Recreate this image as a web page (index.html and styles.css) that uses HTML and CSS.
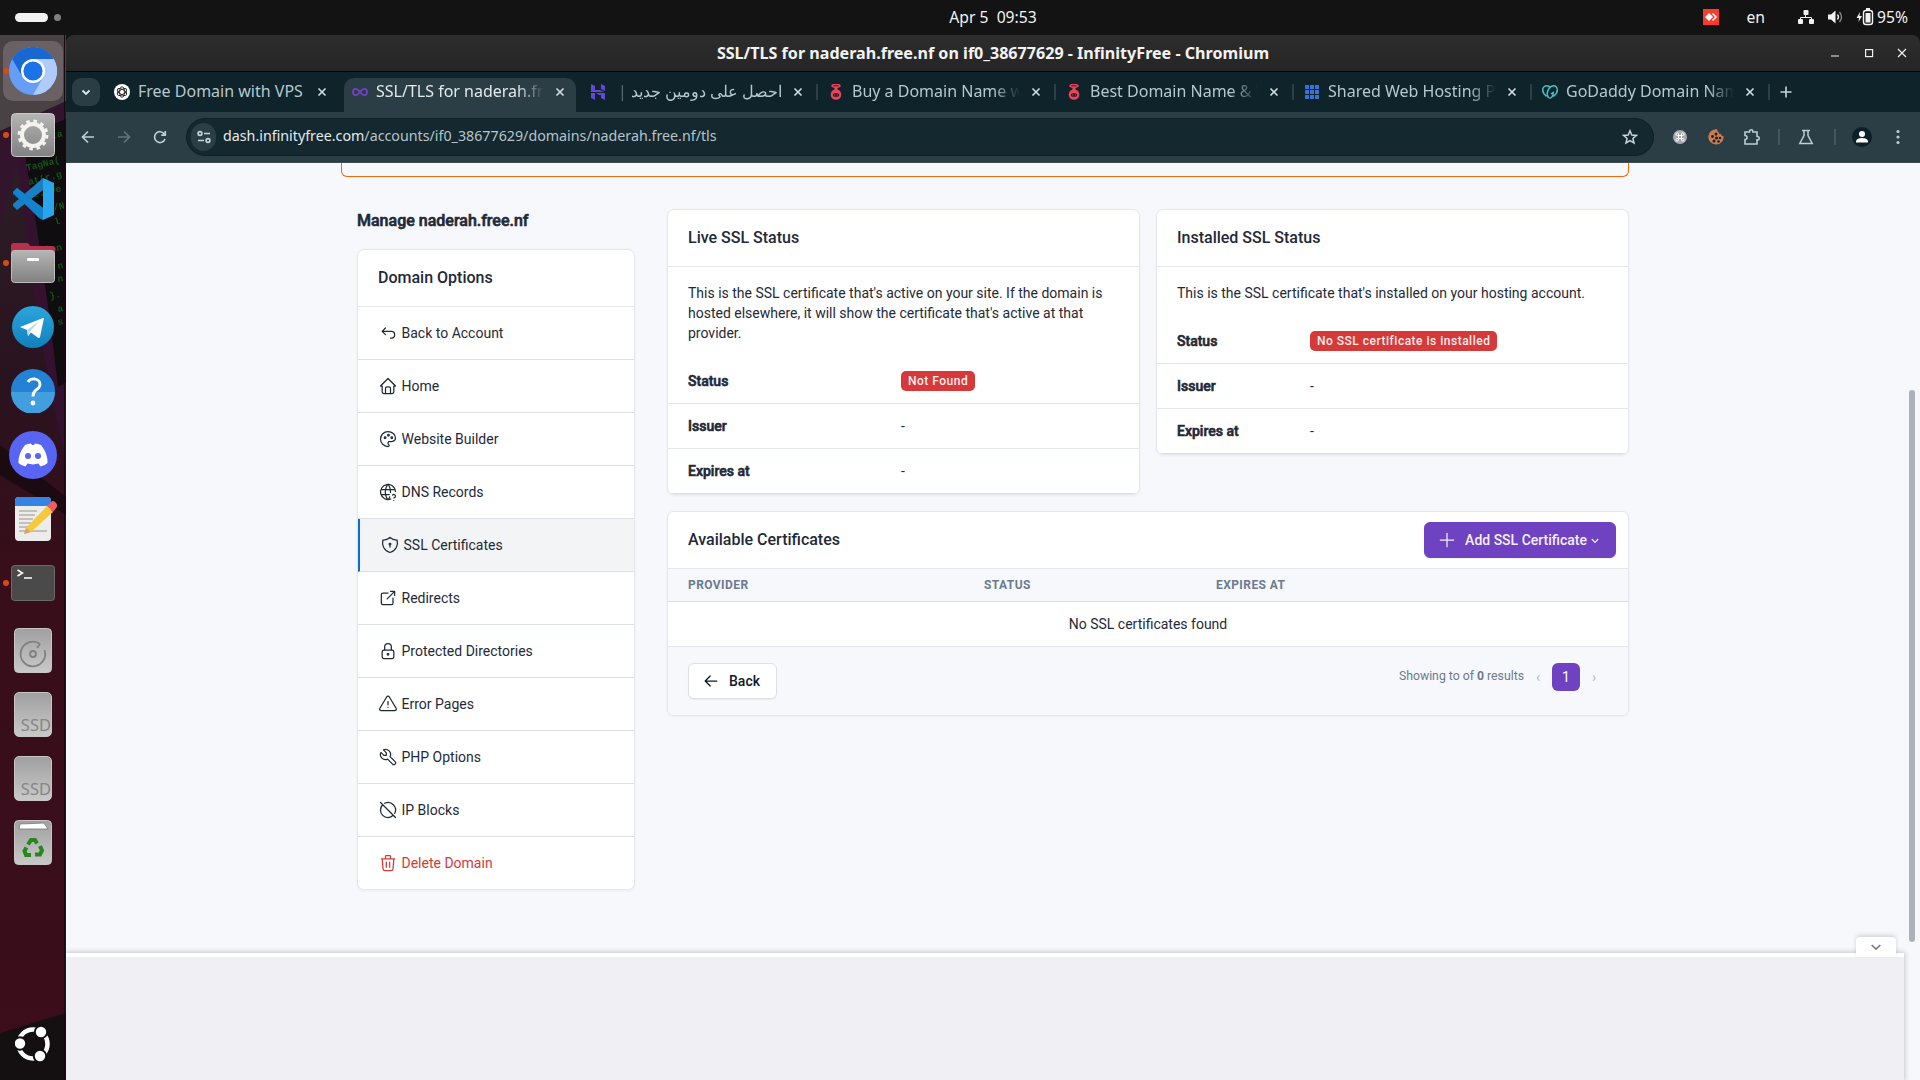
FILE: index.html
```html
<!DOCTYPE html>
<html lang="en">
<head>
<meta charset="utf-8">
<title>SSL/TLS for naderah.free.nf on if0_38677629 - InfinityFree</title>
<link rel="stylesheet" href="styles.css">
</head>
<body>
<header class="topbar">
  <div class="workspaces"><span class="ws-active"></span><span class="ws-dot"></span></div>
  <div class="clock">Apr 5&nbsp; 09:53</div>
  <div class="tray">
    <svg class="tray-any" width="16" height="16" viewBox="0 0 16 16"><rect width="16" height="16" fill="#fb3b2f"/><path d="M6 4l4 4-4 4-4-4z" fill="#fff"/><path d="M9.500 4.500L13 8l-3.500 3.500" fill="none" stroke="#fff" stroke-width="1.500"/></svg>
    <span class="tray-lang">en</span>
    <svg class="tray-net" width="16" height="16" viewBox="0 0 16 16" fill="#f2f2f2"><rect x="5.500" y="1" width="5" height="5" rx="1"/><rect x="0" y="10" width="5" height="5" rx="1"/><rect x="11" y="10" width="5" height="5" rx="1"/><path d="M7.500 6v2.500M2.500 11V8.500h11V11" stroke="#f2f2f2" fill="none"/></svg>
    <svg class="tray-vol" width="16" height="16" viewBox="0 0 16 16"><path d="M0 5.500h3L7.500 1.500v13L3 10.500H0z" fill="#f2f2f2"/><path d="M9.500 5.500q2 2.500 0 5" fill="none" stroke="#f2f2f2" stroke-width="1.300"/><path d="M11.500 3q4 5 0 10" fill="none" stroke="#8a8a8a" stroke-width="1.300"/></svg>
    <svg class="tray-bat" width="18" height="18" viewBox="0 0 18 18"><path d="M4 4L.5 10H3l-.5 4L6 8H3.500z" fill="#f2f2f2"/><rect x="7.500" y="2.500" width="9" height="14" rx="2.500" fill="none" stroke="#f2f2f2" stroke-width="1.400"/><rect x="9.500" y="5" width="5" height="9.500" fill="#f2f2f2"/><rect x="10" y="0" width="4" height="2" fill="#f2f2f2"/></svg>
    <span class="tray-pct">95%</span>
  </div>
</header>
<div class="desktop">
<nav class="dock">
  <svg class="wallpaper" width="66" height="1045" viewBox="0 0 66 1045">
    <defs>
      <linearGradient id="wall" x1="0" y1="0" x2="0" y2="1"><stop offset="0" stop-color="#2d2329"/><stop offset=".33" stop-color="#29131f"/><stop offset=".5" stop-color="#370e1a"/><stop offset="1" stop-color="#3c0d1c"/></linearGradient>
    </defs>
    <rect width="66" height="1045" fill="url(#wall)"/>
    <path d="M0 0H66V68L0 98z" fill="#494244"/>
    <path d="M66 66L0 96V190L20 120L66 84z" fill="#32152c"/>
    <path d="M66 84L22 102Q44 230 58 352L66 348z" fill="#100d10"/>
    <path d="M14 104H22Q44 230 58 352L66 348V430L40 300z" fill="#351130"/>
    <path d="M0 410L66 462V480L0 440z" fill="#1b0a11"/>
    <g class="code">
      <text transform="translate(52 104) rotate(-14)">ta</text>
      <text transform="translate(28 121) rotate(-14)">&lt;ctta</text>
      <text transform="translate(27 136) rotate(-14)">TagNa(</text>
      <text transform="translate(29 150) rotate(-14)">at(r.g</text>
      <text transform="translate(34 163) rotate(-14)">t.Eve</text>
      <text transform="translate(54 176) rotate(-14)">/N</text>
      <text transform="translate(55 190) rotate(-14)">l</text>
      <text transform="translate(40 219) rotate(-10)">tion</text>
      <text transform="translate(58 234) rotate(-10)">n</text>
      <text transform="translate(58 247) rotate(-10)">n</text>
      <text transform="translate(50 264) rotate(-10)">}.</text>
      <text transform="translate(58 277) rotate(-10)">a</text>
      <text transform="translate(58 290) rotate(-10)">s</text>
    </g>
    <path d="M0 998L66 978V1045H0z" fill="#140f10"/>
    <path d="M64.500 0V1045" stroke="#1a0810"/>
  </svg>
  <div class="dock-item focused running"><svg width="48" height="48" viewBox="0 0 48 48"><circle cx="24" cy="24" r="24" fill="#669df6"/><path d="M24 24L3.200 12A24 24 0 0 1 44.800 12z" fill="#1967d2"/><path d="M24 12H44.800A24 24 0 0 1 24 48L34.400 30z" fill="#aecbfa"/><path d="M3.200 12L13.600 30 24 12z" fill="#1967d2"/><circle cx="24" cy="24" r="12" fill="#fff"/><circle cx="24" cy="24" r="9.600" fill="#1a73e8"/></svg></div>
  <div class="dock-item running"><svg width="44" height="44" viewBox="0 0 44 44"><defs><linearGradient id="metal" x1="0" y1="0" x2="0" y2="1"><stop offset="0" stop-color="#b5b5b5"/><stop offset="1" stop-color="#818181"/></linearGradient><linearGradient id="disk" x1="0" y1="0" x2="0" y2="1"><stop offset="0" stop-color="#a0a0a0"/><stop offset="1" stop-color="#c9c9c9"/></linearGradient></defs><rect x=".5" y=".5" width="43" height="43" rx="4" fill="url(#metal)" stroke="#c9c9c9"/><circle cx="22" cy="22" r="14" fill="none" stroke="#f3f3f0" stroke-width="2.800" stroke-dasharray="3.600 3.730"/><circle cx="22" cy="22" r="11" fill="none" stroke="#f3f3f0" stroke-width="4"/></svg></div>
  <div class="dock-item"><svg width="42" height="44" viewBox="0 0 42 44"><path d="M31 1v12L5 33l-4-4 0-2z" fill="#1b7fc4"/><path d="M31 43V31L5 11 1 15v2z" fill="#1172b8"/><path d="M31 1l11 5v32l-11 5z" fill="#2aa4ec"/><path d="M1 15L27 41l4 2V31L5 11z" fill="#1483cd"/></svg></div>
  <div class="dock-item running"><svg width="44" height="42" viewBox="0 0 44 42"><path d="M0 4q0-3 3-3h13q2 0 3 3h22q3 0 3 3v14H0z" fill="#b9304f"/><rect x=".5" y="8.500" width="43" height="32" rx="3" fill="url(#metal)" stroke="#bdbdbd"/><rect x="16" y="16" width="12" height="3" rx="1" fill="#fff"/></svg></div>
  <div class="dock-item"><svg width="42" height="42" viewBox="0 0 42 42"><defs><linearGradient id="tg" x1="0" y1="0" x2="0" y2="1"><stop offset="0" stop-color="#2ba5de"/><stop offset="1" stop-color="#1180bd"/></linearGradient></defs><circle cx="21" cy="21" r="21" fill="url(#tg)"/><path d="M8 21L31 12q1-.3.800 1L28 31q-.5 1.500-2 .7L19 26.500 16 30l-1-6z" fill="#fff"/><path d="M15 24L27 15.500 18 25.500 16 30z" fill="#b5d7ea"/></svg></div>
  <div class="dock-item"><svg width="44" height="44" viewBox="0 0 44 44"><circle cx="22" cy="22" r="22" fill="#2382d4"/><path d="M0 23H44A22 22 0 0 1 0 23z" fill="#439ee0"/><path d="M17 13q2-3.500 7-3 5 1 5 5.500 0 3-4 5.500-3 2-3 6.500" fill="none" stroke="#fff" stroke-width="2.800"/><circle cx="22" cy="34" r="2.400" fill="#fff"/></svg></div>
  <div class="dock-item"><svg width="48" height="48" viewBox="0 0 48 48"><circle cx="24" cy="24" r="24" fill="#5865f2"/><path d="M16 14q3-1.500 6-1.500l1 1.500h2l1-1.500q3 0 6 1.500 7 9 6.500 18-3 3-7 3.500l-2-3-5.500 1-5.500-1-2 3q-4-.5-7-3.500Q9 23 16 14z" fill="#fff"/><circle cx="19" cy="25" r="3" fill="#5865f2"/><circle cx="29" cy="25" r="3" fill="#5865f2"/></svg></div>
  <div class="dock-item"><svg class="note" width="48" height="46" viewBox="0 0 48 46"><rect x="6" y="1" width="36" height="44" rx="4" fill="#ececec"/><path d="M6 10V5q0-4 4-4h28q4 0 4 4v5z" fill="#3584e4"/><path d="M10 15h18M10 19h16M10 23h14M10 27h12M10 31h10M10 35h28" stroke="#c5c0b5" stroke-width="1.800"/><path d="M17 32L38 10l6 6-22 20-7 2z" fill="#f6c93b"/><path d="M17 32l5 4-7 2z" fill="#caa67a"/><path d="M38 10l4-4q2-2 4 0l1.500 1.500q1.500 2 0 4L44 16z" fill="#ed5e62"/></svg></div>
  <div class="dock-item running"><svg width="44" height="36" viewBox="0 0 44 36"><rect x=".5" y=".5" width="43" height="35" rx="3" fill="#4a4a4a" stroke="#6a6a6a"/><path d="M6.500 5l5 3-5 3M13 13h8" fill="none" stroke="#fff" stroke-width="1.500"/></svg></div>
  <div class="dock-sep"></div>
  <div class="dock-item"><svg width="38" height="45" viewBox="0 0 38 45"><rect x=".5" y=".5" width="37" height="44" rx="4" fill="url(#disk)" stroke="#c6c6c6"/><path d="M26 16A12.300 12.300 0 1 0 30.500 22M26 16l-3 4" fill="none" stroke="#808080" stroke-width="1.800"/><circle cx="19" cy="26" r="3" fill="none" stroke="#808080" stroke-width="1.800"/></svg></div>
  <div class="dock-item"><div class="ssd">SSD</div></div>
  <div class="dock-item"><div class="ssd">SSD</div></div>
  <div class="dock-item"><svg width="38" height="45" viewBox="0 0 38 45"><rect x=".5" y=".5" width="37" height="44" rx="4" fill="url(#disk)" stroke="#c6c6c6"/><path d="M5 9l1-5 24-1 4 6z" fill="#fff" stroke="#777" stroke-width=".8"/><g fill="none" stroke="#26871a" stroke-width="4"><path d="M14 24.500l3-4.500h4l2 3.500M26 26l2 4.500-2 4h-5M17 35h-5l-1.500-4 2-3.500"/></g></svg></div>
  <div class="dock-item show-apps"><svg width="36" height="36" viewBox="0 0 36 36"><circle cx="18" cy="18" r="14.500" fill="none" stroke="#fff" stroke-width="4.500"/><g fill="#fff" stroke="#140f10" stroke-width="2"><circle cx="5" cy="17.500" r="6.200"/><circle cx="26" cy="6" r="6.200"/><circle cx="25" cy="30" r="6.200"/></g></svg></div>
</nav>
<main class="window">
  <div class="titlebar">
    <span class="win-title">SSL/TLS for naderah.free.nf on if0_38677629 - InfinityFree - Chromium</span>
    <svg class="win-buttons" width="84" height="14" viewBox="0 0 84 14" fill="none" stroke="#f0f0f0" stroke-width="1.200"><path d="M4 10h8"/><rect x="38.600" y="3.600" width="7" height="7"/><path d="M71 3l8 8M79 3l-8 8"/></svg>
  </div>
  <div class="tabstrip">
    <div class="tab-search"><svg width="10" height="7" viewBox="0 0 10 7"><path d="M1.500 1.500L5 5l3.500-3.500" fill="none" stroke="#dbe6ea" stroke-width="1.800"/></svg></div>
    <div class="tabs">
      <div class="tab no-sep"><svg class="fav" viewBox="0 0 16 16"><circle cx="8" cy="8" r="8" fill="#fff"/><g fill="none" stroke="#222" stroke-width=".9"><ellipse cx="8" cy="8" rx="2.400" ry="5.200"/><ellipse cx="8" cy="8" rx="2.400" ry="5.200" transform="rotate(60 8 8)"/><ellipse cx="8" cy="8" rx="2.400" ry="5.200" transform="rotate(120 8 8)"/></g></svg><span class="tab-title whole">Free Domain with VPS</span><svg class="x" viewBox="0 0 10 10"><path d="M1.500 1.500l7 7M8.500 1.500l-7 7"/></svg></div>
      <div class="tab active"><svg class="fav" viewBox="0 0 16 16"><path d="M8 8C5 3.500 1 4 1 8s4 4.500 7 0 7-4 7 0-4 4.500-7 0z" fill="none" stroke="#6f42c1" stroke-width="1.800"/></svg><span class="tab-title">SSL/TLS for naderah.free.nf</span><svg class="x" viewBox="0 0 10 10"><path d="M1.500 1.500l7 7M8.500 1.500l-7 7"/></svg></div>
      <div class="tab"><svg class="fav" viewBox="0 0 16 16" fill="#6747d8"><path d="M1 0l4 2v4h5l4 2H1zM11 0l4 2v5l-4-2zM1 9l4 0 0 4 0 3-4-2zM6 9l9 0v7l-4-2v-3H9z"/></svg><span class="tab-title rtl">احصل على دومين جديد |</span><svg class="x" viewBox="0 0 10 10"><path d="M1.500 1.500l7 7M8.500 1.500l-7 7"/></svg></div>
      <div class="tab"><svg class="fav" viewBox="0 0 16 16"><ellipse cx="8" cy="1.800" rx="4" ry="1.300" fill="none" stroke="#f0435a" stroke-width="1.500"/><circle cx="8" cy="10.500" r="5.300" fill="#f0435a"/><path d="M6.500 3h3v3h-3z" fill="#f0435a"/><rect x="4.800" y="9.200" width="6.400" height="3.600" rx="1.800" fill="#10232b"/><path d="M6 11h1.200M8.800 11H10" stroke="#f0435a"/></svg><span class="tab-title">Buy a Domain Name with</span><svg class="x" viewBox="0 0 10 10"><path d="M1.500 1.500l7 7M8.500 1.500l-7 7"/></svg></div>
      <div class="tab"><svg class="fav" viewBox="0 0 16 16"><ellipse cx="8" cy="1.800" rx="4" ry="1.300" fill="none" stroke="#f0435a" stroke-width="1.500"/><circle cx="8" cy="10.500" r="5.300" fill="#f0435a"/><path d="M6.500 3h3v3h-3z" fill="#f0435a"/><rect x="4.800" y="9.200" width="6.400" height="3.600" rx="1.800" fill="#10232b"/><path d="M6 11h1.200M8.800 11H10" stroke="#f0435a"/></svg><span class="tab-title">Best Domain Name &amp; Web</span><svg class="x" viewBox="0 0 10 10"><path d="M1.500 1.500l7 7M8.500 1.500l-7 7"/></svg></div>
      <div class="tab"><svg class="fav" viewBox="0 0 16 16" fill="#3673d8"><path d="M1 1h4v4H1zM6 1h4v4H6zM11 1h4v4h-4zM1 6h4v4H1zM6 6h4v4H6zM11 6h4v4h-4zM1 11h4v4H1zM6 11h4v4H6zM11 11h4v4h-4z"/></svg><span class="tab-title">Shared Web Hosting Plans</span><svg class="x" viewBox="0 0 10 10"><path d="M1.500 1.500l7 7M8.500 1.500l-7 7"/></svg></div>
      <div class="tab"><svg class="fav" viewBox="0 0 16 16" fill="none" stroke="#45c1c5" stroke-width="1.500"><path d="M4.500 12.500C1.500 10 0 6.500 1.200 3.800 2.500 1 6 1 8.500 3.600M11.500 12.500C14.500 10 16 6.500 14.800 3.800 13.500 1 9.500 1 7 4.500 4.800 7.800 5 11.500 6.500 13.500M6.500 13.500q1.500 1 3 0 1.800-1.500 1.800-5L9 9.800"/></svg><span class="tab-title">GoDaddy Domain Names</span><svg class="x" viewBox="0 0 10 10"><path d="M1.500 1.500l7 7M8.500 1.500l-7 7"/></svg></div>
    </div>
    <svg class="newtab" width="12" height="12" viewBox="0 0 12 12"><path d="M6 .5v11M.5 6h11" stroke="#c6d5db" stroke-width="1.600"/></svg>
  </div>
  <div class="toolbar">
    <svg class="nav-ic" viewBox="0 0 16 16"><path d="M14 8H3M8 2.500L2.500 8 8 13.500"/></svg>
    <svg class="nav-ic dim" viewBox="0 0 16 16"><path d="M2 8h11M8 2.500L13.500 8 8 13.500"/></svg>
    <svg class="nav-ic" viewBox="0 0 16 16"><path d="M13 10a5.400 5.400 0 1 1-.5-4.800M13.300 2v4.200H9.200"/></svg>
    <div class="omnibox">
      <span class="site-info"><svg width="14" height="14" viewBox="0 0 14 14" fill="none" stroke="#c8d5da" stroke-width="1.600"><circle cx="3" cy="3.500" r="1.900"/><path d="M7 3.500h6M1 10.500h6"/><circle cx="11" cy="10.500" r="1.900"/></svg></span>
      <span class="url"><b>dash.infinityfree.com</b>/accounts/if0_38677629/domains/naderah.free.nf/tls</span>
      <svg class="star" width="16" height="16" viewBox="0 0 16 16"><path d="M8 1.800l1.800 4.200 4.600.4-3.500 3 1.100 4.500L8 11.500l-4 2.400 1.100-4.500-3.500-3 4.600-.4z" fill="none" stroke="#c8d5da" stroke-width="1.500"/></svg>
    </div>
    <div class="tools">
      <svg width="14" height="14" viewBox="0 0 14 14"><circle cx="7" cy="7" r="7" fill="#aaa"/><path d="M5.500 5.500h3v3h-3zM5.500 5.500V4.200A1.300 1.300 0 1 0 4.200 5.500zM8.500 5.500V4.200a1.300 1.300 0 1 1 1.300 1.300zM5.500 8.500v1.300a1.300 1.300 0 1 1-1.300-1.300zM8.500 8.500v1.300a1.300 1.300 0 1 0 1.300-1.300z" fill="none" stroke="#fff"/></svg>
      <svg class="cookie" width="16" height="16" viewBox="0 0 16 16"><path d="M9.500.5A7.600 7.600 0 1 0 15.500 7a2 2 0 0 1-2.500-2 2 2 0 0 1-2.500-2q-1.500-1-1-2.500z" fill="#c87e52"/><g fill="#20201f"><circle cx="8" cy="5" r="1.500"/><circle cx="4.500" cy="7.500" r="1.400"/><circle cx="8.500" cy="9" r="1.500"/><circle cx="12" cy="9" r="1.300"/><circle cx="6" cy="12" r="1.500"/><circle cx="10.500" cy="12.500" r="1.300"/></g></svg>
      <svg class="puzzle" width="18" height="18" viewBox="0 0 18 18"><path d="M2 4h4.500V3.500a1.700 1.700 0 0 1 3.400 0V4H14v4.500h.5a1.700 1.700 0 0 1 0 3.400H14V16H2v-4.500a2 2 0 0 0 0-4z" fill="none" stroke="#b9cfd6" stroke-width="1.600"/></svg>
      <i class="vsep"></i>
      <svg class="flask" width="16" height="16" viewBox="0 0 16 16"><path d="M4 1.500h8M6 2v4.500L1.800 14.500h12.400L10 6.500V2" fill="none" stroke="#b9cfd6" stroke-width="1.500"/></svg>
      <i class="vsep second"></i>
      <svg class="profile" width="20" height="20" viewBox="0 0 20 20"><circle cx="10" cy="10" r="10" fill="#0c2029"/><circle cx="10" cy="7" r="3" fill="#fff"/><path d="M4 15.500V14q1-3 6-3t6 3v1.500z" fill="#fff"/></svg>
      <svg class="more" width="4" height="16" viewBox="0 0 4 16" fill="#b9cfd6"><circle cx="2" cy="2.500" r="1.600"/><circle cx="2" cy="8" r="1.600"/><circle cx="2" cy="13.500" r="1.600"/></svg>
    </div>
  </div>
  <div class="viewport">
    <div class="alert-end"></div>
    <div class="columns">
      <aside class="side">
        <h2 class="page-title">Manage naderah.free.nf</h2>
        <div class="card">
          <div class="card-header">Domain Options</div>
          <a class="item"><svg class="ti" viewBox="0 0 24 24"><path d="M9 14l-4 -4l4 -4M5 10h11a4 4 0 1 1 0 8h-1"/></svg>Back to Account</a>
          <a class="item"><svg class="ti" viewBox="0 0 24 24"><path d="M5 12l-2 0l9 -9l9 9l-2 0M5 12v7a2 2 0 0 0 2 2h10a2 2 0 0 0 2 -2v-7M9 21v-6a2 2 0 0 1 2 -2h2a2 2 0 0 1 2 2v6"/></svg>Home</a>
          <a class="item"><svg class="ti" viewBox="0 0 24 24"><path d="M12 21a9 9 0 0 1 0 -18c4.970 0 9 3.582 9 8c0 1.060 -.474 2.078 -1.318 2.828c-.844 .75 -1.989 1.172 -3.182 1.172h-2.500a2 2 0 0 0 -1 3.750a1.300 1.300 0 0 1 -1 2.250"/><circle cx="8.500" cy="10.500" r="1"/><circle cx="12.500" cy="7.500" r="1"/><circle cx="16.500" cy="10.500" r="1"/></svg>Website Builder</a>
          <a class="item"><svg class="ti" viewBox="0 0 24 24"><path d="M20.975 11.330a9 9 0 1 0 -5.673 9.043M3.600 9h16.800M3.600 15h9.900M11.500 3a17 17 0 0 0 0 18M12.500 3a16.988 16.988 0 0 1 2.570 9.518m-1.056 5.403a17 17 0 0 1 -1.514 3.079M19 22v.01M19 19a2.003 2.003 0 0 0 .914 -3.782a1.980 1.980 0 0 0 -2.414 .483"/></svg>DNS Records</a>
          <a class="item current"><svg class="ti" viewBox="0 0 24 24"><path d="M12 3a12 12 0 0 0 8.500 3a12 12 0 0 1 -8.500 15a12 12 0 0 1 -8.500 -15a12 12 0 0 0 8.500 -3M11 11a1 1 0 1 0 2 0a1 1 0 1 0 -2 0M12 12l0 2.500"/></svg>SSL Certificates</a>
          <a class="item"><svg class="ti" viewBox="0 0 24 24"><path d="M12 6h-6a2 2 0 0 0 -2 2v10a2 2 0 0 0 2 2h10a2 2 0 0 0 2 -2v-6M11 13l9 -9M15 4h5v5"/></svg>Redirects</a>
          <a class="item"><svg class="ti" viewBox="0 0 24 24"><path d="M5 13a2 2 0 0 1 2 -2h10a2 2 0 0 1 2 2v6a2 2 0 0 1 -2 2h-10a2 2 0 0 1 -2 -2v-6zM11 16a1 1 0 1 0 2 0a1 1 0 0 0 -2 0M8 11v-4a4 4 0 1 1 8 0v4"/></svg>Protected Directories</a>
          <a class="item"><svg class="ti" viewBox="0 0 24 24"><path d="M12 9v4M10.363 3.591l-8.106 13.534a1.914 1.914 0 0 0 1.636 2.871h16.214a1.914 1.914 0 0 0 1.636 -2.870l-8.106 -13.536a1.914 1.914 0 0 0 -3.274 0zM12 16h.01"/></svg>Error Pages</a>
          <a class="item"><svg class="ti" viewBox="0 0 24 24"><path d="M7 10h3v-3l-3.500 -3.500a6 6 0 0 1 8 8l6 6a2 2 0 0 1 -3 3l-6 -6a6 6 0 0 1 -8 -8l3.500 3.500"/></svg>PHP Options</a>
          <a class="item"><svg class="ti" viewBox="0 0 24 24"><path d="M20.042 16.045a9 9 0 0 0 -12.087 -12.087m-2.318 1.677a9 9 0 1 0 12.725 12.730M3 3l18 18"/></svg>IP Blocks</a>
          <a class="item danger"><svg class="ti" viewBox="0 0 24 24"><path d="M4 7l16 0M10 11l0 6M14 11l0 6M5 7l1 12a2 2 0 0 0 2 2h8a2 2 0 0 0 2 -2l1 -12M9 7v-3a1 1 0 0 1 1 -1h4a1 1 0 0 1 1 1v3"/></svg>Delete Domain</a>
        </div>
      </aside>
      <section class="content">
        <div class="status-row">
          <div class="card status-card live">
            <div class="card-header">Live SSL Status</div>
            <p class="desc">This is the SSL certificate that's active on your site. If the domain is hosted elsewhere, it will show the certificate that's active at that provider.</p>
            <div class="kv"><b>Status</b><span><em class="badge">Not Found</em></span></div>
            <div class="kv"><b>Issuer</b><span>-</span></div>
            <div class="kv"><b>Expires at</b><span>-</span></div>
          </div>
          <div class="card status-card installed">
            <div class="card-header">Installed SSL Status</div>
            <p class="desc">This is the SSL certificate that's installed on your hosting account.</p>
            <div class="kv"><b>Status</b><span><em class="badge">No SSL certificate is installed</em></span></div>
            <div class="kv"><b>Issuer</b><span>-</span></div>
            <div class="kv"><b>Expires at</b><span>-</span></div>
          </div>
        </div>
        <div class="card certs">
          <div class="card-header with-action">Available Certificates
            <button class="btn primary"><svg class="ti plus" viewBox="0 0 24 24"><path d="M12 4v16M4 12h16"/></svg>Add SSL Certificate<svg class="caret" width="8" height="6" viewBox="0 0 8 6"><path d="M.8 1L4 4.300 7.200 1" fill="none" stroke="#f3effa" stroke-width="1.200"/></svg></button>
          </div>
          <div class="thead"><span>Provider</span><span>Status</span><span>Expires at</span></div>
          <div class="empty">No SSL certificates found</div>
          <div class="card-footer">
            <button class="btn"><svg class="ti" viewBox="0 0 24 24"><path d="M5 12l14 0M5 12l6 6M5 12l6 -6"/></svg>Back</button>
            <div class="pager"><span class="summary">Showing to of <b>0</b> results</span><i class="arrow">‹</i><span class="page">1</span><i class="arrow">›</i></div>
          </div>
        </div>
      </section>
    </div>
    <div class="scrollbar"><div class="thumb"></div></div>
    <div class="anchor-ad"><div class="ad-toggle"><svg width="10" height="7" viewBox="0 0 10 7"><path d="M.7 1L5 5 9.300 1" fill="none" stroke="#7d7892" stroke-width="1.700"/></svg></div></div>
  </div>
</main>
</div>
</body>
</html>
```
FILE: styles.css
```css
* { box-sizing: border-box; }
body {
  margin: 0;
  width: 1920px;
  height: 1080px;
  overflow: hidden;
  background: #131313;
  font-family: "Noto Sans", sans-serif;
}
svg { display: block; flex: none; }

/* Desktop top bar */
.topbar {
  height: 35px;
  display: grid;
  grid-template-columns: 1fr auto 1fr;
  align-items: center;
  color: #f2f2f2;
  font-size: 15.700px;
  line-height: 22px;
}
.workspaces { display: flex; align-items: center; gap: 6px; padding-left: 15px; }
.ws-active { width: 33px; height: 9px; border-radius: 5px; background: #f2f2f2; }
.ws-dot { width: 7px; height: 7px; border-radius: 50%; background: #808080; }
.clock { padding: 0 0 2px 66px; }
.tray { display: flex; align-items: center; justify-content: flex-end; padding: 0 12px 1px 0; }
.tray-lang { margin: 0 33px 0 27px; }
.tray-vol { margin: 0 12px 0 14px; }
.tray-bat { margin-right: 3px; }

.desktop { display: flex; height: 1045px; }

/* Dock */
.dock {
  position: relative;
  width: 66px;
  flex: none;
  display: flex;
  flex-direction: column;
  padding: 4px 0;
}
.wallpaper { position: absolute; left: 0; top: 0; }
.code { font: 700 9.500px "Liberation Mono", monospace; fill: #16631b; opacity: .8; }
.dock-item {
  position: relative;
  height: 64px;
  display: flex;
  align-items: center;
  justify-content: center;
}
.focused::before {
  content: "";
  position: absolute;
  left: 3px;
  top: 2px;
  width: 60px;
  height: 60px;
  border-radius: 10px;
  background: #696163;
}
.focused svg { position: relative; }
.running::after {
  content: "";
  position: absolute;
  left: 3px;
  top: 29px;
  width: 6px;
  height: 6px;
  border-radius: 50%;
  background: #d84a15;
}
.dock-sep { height: 1px; margin: 1px 9px; background: #545051; }
.ssd {
  width: 38px;
  height: 45px;
  border: 1px solid #c6c6c6;
  border-radius: 5px;
  background: linear-gradient(#a0a0a0, #c9c9c9);
  display: flex;
  align-items: flex-end;
  justify-content: flex-end;
  padding-bottom: 1px;
  font-size: 16.500px;
  line-height: 20px;
  color: #868686;
}
.show-apps { margin-top: auto; }

/* Browser window */
.window {
  flex: 1;
  min-width: 0;
  display: flex;
  flex-direction: column;
  border-radius: 8px 8px 0 0;
  overflow: hidden;
}
.titlebar {
  position: relative;
  height: 37px;
  display: flex;
  align-items: center;
  justify-content: center;
  background: linear-gradient(#2d2d2d, #252525);
  border-bottom: 1px solid #060808;
  color: #f2f2f2;
  font-size: 16.100px;
  line-height: 22px;
  font-weight: 700;
}
.win-buttons { position: absolute; right: 9px; top: 11px; }
.tabstrip {
  height: 40px;
  display: flex;
  background: #0f232b;
}
.tab-search {
  width: 28px;
  height: 28px;
  margin: 6px 3px 0 6px;
  border-radius: 9px;
  background: #2a3c44;
  display: flex;
  align-items: center;
  justify-content: center;
}
.tabs { display: flex; }
.tab {
  position: relative;
  width: 238px;
  height: 40px;
  display: flex;
  align-items: center;
  padding-left: 11px;
  color: #b5c8d0;
}
.tab:not(.active)::after {
  content: "";
  position: absolute;
  right: -1px;
  top: 12px;
  width: 2px;
  height: 16px;
  background: #2d4049;
}
.tab.no-sep::after { display: none; }
.active { color: #e3e9eb; }
.active::before {
  content: "";
  position: absolute;
  inset: 6px 3px 0;
  border-radius: 10px 10px 0 0;
  background: #2b3d45;
}
.active > * { position: relative; }
.fav { width: 16px; height: 16px; }
.tab-title {
  width: 168px;
  margin: 0 11px 3px 8px;
  overflow: hidden;
  white-space: nowrap;
  font-size: 16px;
  line-height: 22px;
  -webkit-mask-image: linear-gradient(90deg, #000 84%, transparent 100%);
}
.whole { -webkit-mask-image: none; }
.rtl { direction: rtl; font-size: 15.700px; -webkit-mask-image: linear-gradient(90deg, transparent 0, #000 11%); }
.x { width: 10px; height: 10px; stroke: #d3dfe3; stroke-width: 1.600; }
.newtab { margin: 14px 0 0 11px; }
.toolbar {
  height: 51px;
  display: flex;
  align-items: center;
  padding-left: 14px;
  background: #2b3d45;
  border-bottom: 1px solid #3b4c53;
}
.nav-ic { width: 16px; height: 16px; margin-right: 20px; fill: none; stroke: #b9cfd6; stroke-width: 1.700; }
.nav-ic.dim { stroke: #62757d; }
.omnibox {
  width: 1468px;
  height: 38px;
  margin-left: -2px;
  border-radius: 19px;
  border: 1px solid #0d1f27;
  background: #142830;
  display: flex;
  align-items: center;
  padding-left: 4px;
}
.site-info {
  width: 25px;
  height: 28px;
  border-radius: 13px;
  background: #2b3d45;
  display: flex;
  align-items: center;
  justify-content: center;
}
.url { flex: 1; margin: 0 0 3px 7px; font-size: 14.250px; line-height: 20px; color: #b9c3c7; }
.url b { font-weight: 400; color: #e5eaec; }
.star { margin-right: 15px; }
.tools { flex: 1; display: flex; align-items: center; padding-left: 19px; }
.cookie { margin-left: 21px; }
.puzzle { margin: 0 17px 0 19px; }
.flask { margin: 0 20px 0 18px; }
.profile { margin: 0 24px 0 16px; }
.vsep { width: 2px; height: 16px; background: #435760; }

/* Page */
.viewport {
  position: relative;
  flex: 1;
  overflow: hidden;
  background: #f6f8fb;
  font-family: Roboto, sans-serif;
  font-size: 14px;
  line-height: 20px;
  color: #1f2937;
}
.alert-end {
  width: 1288px;
  height: 14px;
  margin-left: 275px;
  border: 1px solid #f76707;
  border-top: 0;
  border-radius: 0 0 6px 6px;
}
.columns { display: flex; align-items: flex-start; gap: 32px; padding-left: 291px; }
.side { width: 278px; padding-top: 32px; }
.page-title {
  margin: 0 0 17px;
  font-size: 16px;
  line-height: 23px;
  font-weight: 500;
  -webkit-text-stroke: .6px #1f2937;
}
.card {
  background: #fff;
  border: 1px solid #e4e7eb;
  border-radius: 7px;
  box-shadow: 0 1px 3px rgba(31, 41, 55, .05);
  overflow: hidden;
}
.card-header {
  height: 57px;
  display: flex;
  align-items: center;
  padding: 0 20px 1px;
  border-bottom: 1px solid #e4e7eb;
  font-size: 16px;
  font-weight: 500;
}
.item {
  height: 53px;
  display: flex;
  align-items: center;
  gap: 3.500px;
  padding-left: 20px;
  border-bottom: 1px solid #dce0e5;
}
.item:last-child { height: 52px; border-bottom: 0; }
.item.current { background: #f3f4f6; border-left: 2px solid #066fd1; }
.item.danger { color: #d63939; }
.ti {
  width: 20px;
  height: 20px;
  fill: none;
  stroke: currentColor;
  stroke-width: 1.500;
  stroke-linecap: round;
  stroke-linejoin: round;
}
.content { width: 962px; padding-top: 32px; display: flex; flex-direction: column; gap: 16px; }
.status-row { display: grid; grid-template-columns: 473px 473px; gap: 16px; align-items: start; }
.desc { margin: 16px 20px; }
.kv {
  display: grid;
  grid-template-columns: 213px 1fr;
  align-items: center;
  height: 45px;
  padding-left: 20px;
  border-bottom: 1px solid #e4e7eb;
}
.kv:last-child { border-bottom-color: #dce0e5; }
.installed .kv { grid-template-columns: 133px 1fr; }
.kv b { font-weight: 500; -webkit-text-stroke: .6px #1f2937; }
.badge {
  display: block;
  width: max-content;
  height: 20px;
  padding: 0 7px;
  border-radius: 5px;
  background: #d63939;
  color: #fbeeee;
  font-style: normal;
  font-size: 12px;
  font-weight: 500;
  letter-spacing: .5px;
}
.with-action { justify-content: space-between; padding-right: 12px; padding-bottom: 0; }
.btn {
  height: 36px;
  display: flex;
  align-items: center;
  padding: 0 16px 0 12px;
  gap: 8px;
  border: 1px solid #dce0e5;
  border-radius: 6px;
  background: #fff;
  box-shadow: 0 1px 1px rgba(31, 41, 55, .06);
  font: 500 14px/20px Roboto, sans-serif;
  color: #111827;
}
.primary { background: #6f42c1; border-color: #6f42c1; color: #f3effa; }
.caret { margin: 2px 0 0 -4px; }
.thead {
  height: 33px;
  display: grid;
  grid-template-columns: 296px 232px 1fr;
  align-items: center;
  padding-left: 20px;
  background: #f6f8fb;
  border-bottom: 1px solid #dce0e5;
  color: #6c7a91;
  font-size: 12px;
  font-weight: 700;
  letter-spacing: .42px;
  text-transform: uppercase;
}
.empty { height: 45px; display: flex; align-items: center; justify-content: center; border-bottom: 1px solid #e4e7eb; }
.card-footer {
  height: 68px;
  display: flex;
  justify-content: space-between;
  padding: 16px 20px 0;
  background: #f6f8fb;
}
.pager { display: flex; height: 28px; align-items: center; font-size: 12.250px; color: #6c7a91; }
.summary { padding-bottom: 3px; }
.page {
  width: 28px;
  height: 28px;
  border-radius: 6px;
  background: #6f42c1;
  color: #fff;
  font-size: 14px;
  line-height: 28px;
  text-align: center;
}
.arrow { width: 28px; text-align: center; font-style: normal; font-size: 14px; color: #b3bac5; }

.scrollbar { position: absolute; right: 5px; top: 227px; }
.thumb { width: 6px; height: 552px; border-radius: 3px; background: #adb1b8; }
.anchor-ad {
  position: absolute;
  left: 0;
  bottom: 0;
  width: 1838px;
  height: 127px;
  background: #efeff4;
  border-top: 4px solid #fff;
  box-shadow: 0 0 5px 1px rgba(0, 0, 0, .2);
}
.ad-toggle {
  position: absolute;
  right: 8px;
  top: -20px;
  width: 40px;
  height: 20px;
  border-radius: 4px 4px 0 0;
  background: #fff;
  box-shadow: 0 -2px 4px rgba(0, 0, 0, .15);
  display: flex;
  align-items: center;
  justify-content: center;
}
```
